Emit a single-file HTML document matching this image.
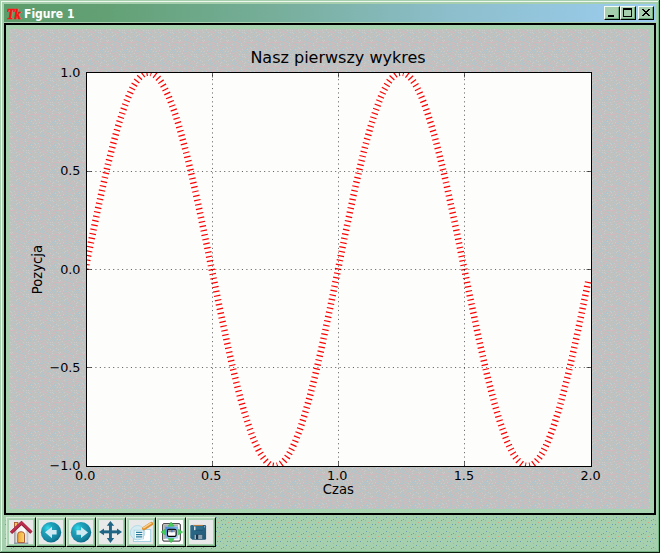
<!DOCTYPE html>
<html><head><meta charset="utf-8"><title>Figure 1</title>
<style>
html,body{margin:0;padding:0;}
body{width:660px;height:553px;overflow:hidden;background:#a6d0ad;position:relative;font-family:"DejaVu Sans","Liberation Sans",sans-serif;}
.abs{position:absolute;}
#frame{left:0;top:0;width:660px;height:553px;box-sizing:border-box;background:#a6d0ad;}
#fr-hl-t{left:1px;top:1px;width:657px;height:1px;background:#eef7ee;}
#fr-hl-l{left:1px;top:1px;width:1px;height:550px;background:#eef7ee;}
#fr-sh-r{left:658px;top:1px;width:1px;height:551px;background:#74b384;}
#fr-sh-b{left:1px;top:551px;width:658px;height:1px;background:#74b384;}
#fr-bk-r{left:659px;top:0;width:1px;height:553px;background:#0a1a0c;}
#fr-bk-b{left:0;top:552px;width:660px;height:1px;background:#0a1a0c;}
#title{left:4px;top:4px;width:652px;height:18px;background:linear-gradient(to right,rgb(92,156,106) 0%,rgb(99,161,117) 16%,rgb(121,176,160) 45%,rgb(140,190,203) 68%,rgb(156,205,240) 100%);}
#title .txt{position:absolute;left:20px;top:3px;color:#fff;font:bold 12px "DejaVu Sans Condensed","DejaVu Sans","Liberation Sans",sans-serif;line-height:14px;white-space:nowrap;letter-spacing:0px}
.tb{position:absolute;top:2px;width:16px;height:14px;box-sizing:border-box;background:#a6d0ad;border-top:1px solid #f4faf4;border-left:1px solid #f4faf4;border-right:1px solid #000;border-bottom:1px solid #000;}
.tb:before{content:"";position:absolute;left:0;top:0;right:0;bottom:0;border-right:1px solid #6aa878;border-bottom:1px solid #6aa878;}
#canvas{left:4px;top:23px;width:652px;height:492px;box-sizing:border-box;border:2px solid #000;background:#a9d3b0;}
#fig{left:10px;top:29px;width:640px;height:480px;background:#c1c1c1;}
.btn{position:absolute;top:517px;width:30px;height:30px;box-sizing:border-box;background:#a6d0ad;border-top:1px solid #d8ecda;border-left:1px solid #d8ecda;border-right:1px solid #000;border-bottom:1px solid #000;}
.btn:before{content:"";position:absolute;left:0;top:0;right:0;bottom:0;border-top:1px solid #aed5b5;border-left:1px solid #aed5b5;border-right:1px solid #78b486;border-bottom:1px solid #78b486;}
.btn .face{position:absolute;left:2px;top:2px;width:24px;height:24px;background:#e9e9e9;}
.btn svg{position:absolute;left:2px;top:2px;width:24px;height:24px;}
</style></head><body>
<div id="frame" class="abs"></div>
<div id="fr-hl-t" class="abs"></div><div id="fr-hl-l" class="abs"></div>
<div id="fr-sh-r" class="abs"></div><div id="fr-sh-b" class="abs"></div>
<div id="fr-bk-r" class="abs"></div><div id="fr-bk-b" class="abs"></div>

<div id="title" class="abs">
<svg class="abs" style="left:1px;top:1px" width="19" height="16" viewBox="0 0 19 16"><text x="1.8" y="13.6" font-family="Liberation Serif, serif" font-style="italic" font-weight="bold" font-size="14.5" fill="#ff1010" stroke="#ff1010" stroke-width="0.55" textLength="14" lengthAdjust="spacingAndGlyphs">Tk</text></svg>
<span class="txt">Figure 1</span>
<div class="tb" style="left:600px"><svg class="abs" style="left:0;top:0" width="14" height="12"><rect x="3" y="8" width="6" height="2" fill="#000"/></svg></div>
<div class="tb" style="left:616px"><svg class="abs" style="left:0;top:0" width="14" height="12"><rect x="2.5" y="2" width="8" height="7.5" fill="none" stroke="#000" stroke-width="1"/><rect x="2" y="1" width="9" height="2" fill="#000"/></svg></div>
<div class="tb" style="left:634px"><svg class="abs" style="left:0;top:0" width="14" height="12"><path d="M3 2h2v1h-2zM9 2h2v1h-2zM4 3h2v1h-2zM8 3h2v1h-2zM5 4h4v1h-4zM6 5h2v1h-2zM5 6h4v1h-4zM4 7h2v1h-2zM8 7h2v1h-2zM3 8h2v1h-2zM9 8h2v1h-2z" fill="#000" shape-rendering="crispEdges"/></svg></div>
</div>

<div id="canvas" class="abs"></div>
<div id="fig" class="abs"></div>

<svg class="abs" style="left:0;top:0" width="660" height="553" viewBox="0 0 660 553" font-family="DejaVu Sans, Liberation Sans, sans-serif">
<defs><pattern id="dg" width="24" height="24" patternUnits="userSpaceOnUse"><rect width="24" height="24" fill="#c0c2c0"/><path d="M0 1h1v1h-1zM0 13h1v1h-1zM1 5h1v1h-1zM1 7h1v1h-1zM1 17h1v1h-1zM1 23h1v1h-1zM2 15h1v1h-1zM2 18h1v1h-1zM3 3h1v1h-1zM3 5h1v1h-1zM3 7h1v1h-1zM3 12h1v1h-1zM3 16h1v1h-1zM4 21h1v1h-1zM4 23h1v1h-1zM5 1h1v1h-1zM5 3h1v1h-1zM5 22h1v1h-1zM6 10h1v1h-1zM6 18h1v1h-1zM6 21h1v1h-1zM7 9h1v1h-1zM7 13h1v1h-1zM7 16h1v1h-1zM8 7h1v1h-1zM8 18h1v1h-1zM9 11h1v1h-1zM10 1h1v1h-1zM10 18h1v1h-1zM11 5h1v1h-1zM11 12h1v1h-1zM11 14h1v1h-1zM11 21h1v1h-1zM12 18h1v1h-1zM13 1h1v1h-1zM13 4h1v1h-1zM13 11h1v1h-1zM13 19h1v1h-1zM14 3h1v1h-1zM14 18h1v1h-1zM14 21h1v1h-1zM15 6h1v1h-1zM15 13h1v1h-1zM15 16h1v1h-1zM15 19h1v1h-1zM16 1h1v1h-1zM16 5h1v1h-1zM16 17h1v1h-1zM16 23h1v1h-1zM17 4h1v1h-1zM17 18h1v1h-1zM17 22h1v1h-1zM18 7h1v1h-1zM19 0h1v1h-1zM19 13h1v1h-1zM19 22h1v1h-1zM20 4h1v1h-1zM20 8h1v1h-1zM20 12h1v1h-1zM20 18h1v1h-1zM20 21h1v1h-1zM20 23h1v1h-1zM21 0h1v1h-1zM21 10h1v1h-1zM22 8h1v1h-1zM22 15h1v1h-1zM22 19h1v1h-1zM22 22h1v1h-1zM23 9h1v1h-1z" fill="#d3b6bd"/><path d="M0 8h1v1h-1zM0 11h1v1h-1zM0 18h1v1h-1zM0 22h1v1h-1zM1 2h1v1h-1zM1 9h1v1h-1zM2 4h1v1h-1zM2 10h1v1h-1zM3 0h1v1h-1zM3 14h1v1h-1zM3 19h1v1h-1zM3 22h1v1h-1zM4 2h1v1h-1zM5 5h1v1h-1zM5 16h1v1h-1zM5 19h1v1h-1zM6 0h1v1h-1zM6 2h1v1h-1zM6 4h1v1h-1zM6 8h1v1h-1zM6 12h1v1h-1zM7 3h1v1h-1zM7 5h1v1h-1zM7 11h1v1h-1zM7 19h1v1h-1zM7 23h1v1h-1zM8 0h1v1h-1zM8 14h1v1h-1zM8 20h1v1h-1zM9 5h1v1h-1zM9 8h1v1h-1zM9 15h1v1h-1zM9 17h1v1h-1zM9 21h1v1h-1zM10 4h1v1h-1zM11 10h1v1h-1zM12 23h1v1h-1zM13 7h1v1h-1zM13 14h1v1h-1zM14 8h1v1h-1zM14 12h1v1h-1zM15 4h1v1h-1zM15 10h1v1h-1zM15 22h1v1h-1zM16 3h1v1h-1zM16 15h1v1h-1zM17 6h1v1h-1zM17 9h1v1h-1zM17 13h1v1h-1zM18 1h1v1h-1zM18 3h1v1h-1zM18 12h1v1h-1zM18 14h1v1h-1zM18 16h1v1h-1zM18 20h1v1h-1zM18 23h1v1h-1zM19 2h1v1h-1zM19 5h1v1h-1zM19 17h1v1h-1zM20 15h1v1h-1zM21 3h1v1h-1zM21 6h1v1h-1zM21 14h1v1h-1zM22 2h1v1h-1zM22 17h1v1h-1zM23 4h1v1h-1zM23 12h1v1h-1zM23 16h1v1h-1zM23 20h1v1h-1z" fill="#adc4ce"/><path d="M0 3h1v1h-1zM1 19h1v1h-1zM1 21h1v1h-1zM2 1h1v1h-1zM2 6h1v1h-1zM2 8h1v1h-1zM2 13h1v1h-1zM4 6h1v1h-1zM4 8h1v1h-1zM4 15h1v1h-1zM4 17h1v1h-1zM5 9h1v1h-1zM5 14h1v1h-1zM7 1h1v1h-1zM8 12h1v1h-1zM9 3h1v1h-1zM10 6h1v1h-1zM10 13h1v1h-1zM10 16h1v1h-1zM10 23h1v1h-1zM11 0h1v1h-1zM11 8h1v1h-1zM11 17h1v1h-1zM12 3h1v1h-1zM12 16h1v1h-1zM14 5h1v1h-1zM14 23h1v1h-1zM15 2h1v1h-1zM16 8h1v1h-1zM16 12h1v1h-1zM16 20h1v1h-1zM17 11h1v1h-1zM19 10h1v1h-1zM23 6h1v1h-1z" fill="#cacaca"/></pattern><pattern id="dn" width="10" height="14" patternUnits="userSpaceOnUse" x="0" y="2"><path d="M0 7h1v1h-1zM1 0h1v1h-1zM2 4h1v1h-1zM3 13h1v1h-1zM5 4h1v1h-1zM6 11h1v1h-1zM7 7h1v1h-1z" fill="#6a9eb4"/><path d="M3 9h1v1h-1zM5 0h1v1h-1zM8 2h1v1h-1zM9 12h1v1h-1z" fill="#d4a284"/></pattern><clipPath id="axclip"><rect x="86.5" y="72.5" width="505" height="394"/></clipPath></defs>
<rect x="10" y="29" width="640" height="480" fill="url(#dg)"/>
<rect x="4" y="515" width="652" height="34" fill="url(#dn)"/>
<rect x="86.5" y="72.5" width="505" height="394" fill="#fdfefc"/>
<g clip-path="url(#axclip)">
<path d="M85.4 269.3 L87.9 256.9 L90.5 244.6 L93.0 232.4 L95.5 220.4 L98.0 208.5 L100.6 196.9 L103.1 185.5 L105.6 174.5 L108.1 163.8 L110.7 153.6 L113.2 143.9 L115.7 134.6 L118.2 125.8 L120.8 117.7 L123.3 110.1 L125.8 103.1 L128.4 96.8 L130.9 91.2 L133.4 86.3 L135.9 82.1 L138.5 78.7 L141.0 76.0 L143.5 74.1 L146.0 72.9 L148.6 72.5 L151.1 72.9 L153.6 74.1 L156.1 76.0 L158.7 78.7 L161.2 82.1 L163.7 86.3 L166.2 91.2 L168.8 96.8 L171.3 103.1 L173.8 110.1 L176.4 117.7 L178.9 125.8 L181.4 134.6 L183.9 143.9 L186.5 153.6 L189.0 163.8 L191.5 174.5 L194.0 185.5 L196.6 196.9 L199.1 208.5 L201.6 220.4 L204.1 232.4 L206.7 244.6 L209.2 256.9 L211.7 269.3 L214.3 281.7 L216.8 294.0 L219.3 306.2 L221.8 318.2 L224.4 330.1 L226.9 341.7 L229.4 353.1 L231.9 364.1 L234.5 374.8 L237.0 385.0 L239.5 394.7 L242.0 404.0 L244.6 412.8 L247.1 420.9 L249.6 428.5 L252.1 435.5 L254.7 441.8 L257.2 447.4 L259.7 452.3 L262.3 456.5 L264.8 459.9 L267.3 462.6 L269.8 464.5 L272.4 465.7 L274.9 466.1 L277.4 465.7 L279.9 464.5 L282.5 462.6 L285.0 459.9 L287.5 456.5 L290.0 452.3 L292.6 447.4 L295.1 441.8 L297.6 435.5 L300.2 428.5 L302.7 420.9 L305.2 412.8 L307.7 404.0 L310.3 394.7 L312.8 385.0 L315.3 374.8 L317.8 364.1 L320.4 353.1 L322.9 341.7 L325.4 330.1 L327.9 318.2 L330.5 306.2 L333.0 294.0 L335.5 281.7 L338.1 269.3 L340.6 256.9 L343.1 244.6 L345.6 232.4 L348.2 220.4 L350.7 208.5 L353.2 196.9 L355.7 185.5 L358.3 174.5 L360.8 163.8 L363.3 153.6 L365.8 143.9 L368.4 134.6 L370.9 125.8 L373.4 117.7 L375.9 110.1 L378.5 103.1 L381.0 96.8 L383.5 91.2 L386.1 86.3 L388.6 82.1 L391.1 78.7 L393.6 76.0 L396.2 74.1 L398.7 72.9 L401.2 72.5 L403.7 72.9 L406.3 74.1 L408.8 76.0 L411.3 78.7 L413.8 82.1 L416.4 86.3 L418.9 91.2 L421.4 96.8 L424.0 103.1 L426.5 110.1 L429.0 117.7 L431.5 125.8 L434.1 134.6 L436.6 143.9 L439.1 153.6 L441.6 163.8 L444.2 174.5 L446.7 185.5 L449.2 196.9 L451.7 208.5 L454.3 220.4 L456.8 232.4 L459.3 244.6 L461.8 256.9 L464.4 269.3 L466.9 281.7 L469.4 294.0 L472.0 306.2 L474.5 318.2 L477.0 330.1 L479.5 341.7 L482.1 353.1 L484.6 364.1 L487.1 374.8 L489.6 385.0 L492.2 394.7 L494.7 404.0 L497.2 412.8 L499.7 420.9 L502.3 428.5 L504.8 435.5 L507.3 441.8 L509.9 447.4 L512.4 452.3 L514.9 456.5 L517.4 459.9 L520.0 462.6 L522.5 464.5 L525.0 465.7 L527.5 466.1 L530.1 465.7 L532.6 464.5 L535.1 462.6 L537.6 459.9 L540.2 456.5 L542.7 452.3 L545.2 447.4 L547.7 441.8 L550.3 435.5 L552.8 428.5 L555.3 420.9 L557.9 412.8 L560.4 404.0 L562.9 394.7 L565.4 385.0 L568.0 374.8 L570.5 364.1 L573.0 353.1 L575.5 341.7 L578.1 330.1 L580.6 318.2 L583.1 306.2 L585.6 294.0 L588.2 281.7" fill="none" stroke="#ff0000" stroke-width="6.6" stroke-dasharray="1.2 3.24" stroke-linejoin="round"/>
</g>
<g stroke="#000" stroke-width="0.6" stroke-dasharray="1.11 3.33" fill="none">
<path d="M212.5 466.5V72.5M338.5 466.5V72.5M464.5 466.5V72.5"/>
<path d="M86.5 171.5H591.5M86.5 269.5H591.5M86.5 367.5H591.5"/>
</g>
<g stroke="#000" stroke-width="0.6" fill="none">
<path d="M86.5 466.5v-5M212.5 466.5v-5M338.5 466.5v-5M464.5 466.5v-5M591.5 466.5v-5"/>
<path d="M86.5 72.5v5M212.5 72.5v5M338.5 72.5v5M464.5 72.5v5M591.5 72.5v5"/>
<path d="M86.5 72.5h5M86.5 171.5h5M86.5 269.5h5M86.5 367.5h5M86.5 466.5h5"/>
<path d="M591.5 72.5h-5M591.5 171.5h-5M591.5 269.5h-5M591.5 367.5h-5M591.5 466.5h-5"/>
</g>
<rect x="86.5" y="72.5" width="505" height="394" fill="none" stroke="#000" stroke-width="1"/>
<g font-size="12.8" fill="#000" text-anchor="middle">
<text x="85.2" y="479.8">0.0</text>
<text x="211.2" y="479.8">0.5</text>
<text x="337.2" y="479.8">1.0</text>
<text x="463.9" y="479.8">1.5</text>
<text x="590.6" y="479.8">2.0</text>
<text x="338.3" y="494.4" font-size="13.2">Czas</text>
</g>
<g font-size="12.8" fill="#000" text-anchor="end">
<text x="80.5" y="76.6">1.0</text>
<text x="80.5" y="175.1">0.5</text>
<text x="80.5" y="273.6">0.0</text>
<text x="80.5" y="372.1">−0.5</text>
<text x="80.5" y="470">−1.0</text>
</g>
<text font-size="13.2" fill="#000" text-anchor="middle" transform="translate(42,269.6) rotate(-90)">Pozycja</text>
<text x="338" y="63.3" font-size="16" fill="#000" text-anchor="middle">Nasz pierwszy wykres</text>
</svg>

<!-- toolbar -->
<div class="btn" style="left:6px"><div class="face"></div><svg viewBox="3 3 24 24">
<defs><linearGradient id="door" x1="0" y1="0" x2="1" y2="0"><stop offset="0" stop-color="#f0a630"/><stop offset="1" stop-color="#f9d674"/></linearGradient>
<linearGradient id="wall" x1="0" y1="0" x2="1" y2="0"><stop offset="0" stop-color="#8c8c8c"/><stop offset="0.2" stop-color="#ececec"/><stop offset="0.75" stop-color="#ffffff"/><stop offset="1" stop-color="#b4bcc2"/></linearGradient></defs>
<rect x="8.5" y="5.5" width="3.3" height="6.5" fill="#f6c060" stroke="#a85a30" stroke-width="0.9"/>
<path d="M8.2 14 L15.5 7.5 L22.2 14 V26.7 H8.2Z" fill="url(#wall)"/>
<path d="M8.2 26.2H22.2" stroke="#6c8494" stroke-width="1"/>
<path d="M11.7 25.6 V17.2 Q11.7 14.7 15.1 14.7 Q18.5 14.7 18.5 17.2 V25.6Z" fill="url(#door)" stroke="#a4502c" stroke-width="0.9"/>
<path d="M5 15.9 L15.5 6 L25.4 15.6" fill="none" stroke="#8e2038" stroke-width="3.2" stroke-linejoin="miter"/>
<path d="M5 15.3 L15.5 5.5 L25.4 15" fill="none" stroke="#bc2c4e" stroke-width="2.3" stroke-linejoin="miter"/>
</svg></div>

<div class="btn" style="left:36px"><div class="face"></div><svg viewBox="3 3 24 24">
<defs><radialGradient id="ball" cx="0.34" cy="0.3" r="0.78"><stop offset="0" stop-color="#34dcec"/><stop offset="0.3" stop-color="#1fa4bc"/><stop offset="0.8" stop-color="#14809c"/><stop offset="1" stop-color="#0c607c"/></radialGradient></defs>
<circle cx="15" cy="15.2" r="10.2" fill="url(#ball)"/>
<path d="M9 15.2 L16 9.8 V13 H20.6 V17.4 H16 V21.2Z" fill="#cfe9f2"/>
</svg></div>

<div class="btn" style="left:66px"><div class="face"></div><svg viewBox="3 3 24 24">
<circle cx="15" cy="15.2" r="10.2" fill="url(#ball)"/>
<path d="M22 15.5 L15 10 V13.3 H10.5 V17.7 H15 V21Z" fill="#cfe9f2"/>
</svg></div>

<div class="btn" style="left:96px"><div class="face"></div><svg viewBox="3 3 24 24">
<g fill="#1f6484" stroke="none">
<rect x="13" y="7" width="2.9" height="16"/><rect x="6" y="13.4" width="17" height="2.9"/>
<path d="M14.4 4 L18.2 8.8 H10.8Z"/><path d="M14.4 25.9 L18.2 21.1 H10.8Z"/>
<path d="M3 14.9 L8 11.5 V18.2Z"/><path d="M26 14.9 L21 11.5 V18.2Z"/>
</g></svg></div>

<div class="btn" style="left:126px"><div class="face"></div><svg viewBox="3 3 24 24">
<rect x="7.4" y="12.6" width="17.3" height="11.8" fill="#ffffff" stroke="#98cce0" stroke-width="0.9"/>
<circle cx="11.6" cy="15.7" r="7.2" fill="#d4ecf2" fill-opacity="0.9" stroke="#b0d8e6" stroke-width="0.9"/>
<rect x="8.2" y="13.2" width="9.2" height="8.8" fill="#f4fbfd" stroke="#a0d2e2" stroke-width="0.7"/>
<path d="M10 15.3H16.3M10 17.6H16.3M10 19.8H16.3" stroke="#2a7e9c" stroke-width="1.3"/>
<path d="M17.9 11.5 L25.3 6.8" stroke="#e0902c" stroke-width="3.7" stroke-linecap="round"/>
<path d="M17.7 10.8 L25 6.2" stroke="#f9d08c" stroke-width="1.5" stroke-linecap="round"/>
</svg></div>

<div class="btn" style="left:156px"><div class="face" style="background:#ffffff"></div><svg viewBox="3 3 24 24">
<defs><linearGradient id="sp" x1="0" y1="0" x2="1" y2="1"><stop offset="0" stop-color="#3c84d4"/><stop offset="1" stop-color="#bcdef4"/></linearGradient></defs>
<rect x="6.7" y="6.7" width="17.6" height="17.4" rx="1.2" fill="#fff" stroke="#111" stroke-width="0.9"/>
<path d="M7.4 7.4 H22 V9.6 H9.4 V22 H7.4Z" fill="#b0b0b0"/>
<rect x="9.2" y="9.5" width="13" height="12.2" fill="url(#sp)"/>
<rect x="11.5" y="12.4" width="8.6" height="7" rx="1.3" fill="#fff" stroke="#000" stroke-width="1.1"/>
<rect x="12.1" y="12.9" width="7.4" height="2.3" fill="#9a9a9a"/><rect x="14.9" y="12.9" width="1.8" height="2.3" fill="#4a80d0"/>
<g fill="#44d058" stroke="#2cb040" stroke-width="0.5"><path d="M15.1 5 L18.1 9.2 H12.1Z"/><path d="M15.1 25.8 L18.1 21.6 H12.1Z"/><path d="M4.9 15.1 L9.2 12.2 V18Z"/><path d="M26.7 15.1 L22.4 12.2 V18Z"/></g>
</svg></div>

<div class="btn" style="left:186px"><div class="face"></div><svg viewBox="3 3 24 24">
<defs><linearGradient id="fl" x1="0" y1="0" x2="1" y2="1"><stop offset="0" stop-color="#2d6c8c"/><stop offset="1" stop-color="#215a78"/></linearGradient></defs>
<path d="M5.6 7.9 H19 Q20.1 7.9 20.1 9 V21.6 Q20.1 22.8 18.9 22.8 H6.4 L4.3 21 V9.2 Q4.3 7.9 5.6 7.9Z" fill="url(#fl)"/>
<rect x="7" y="7.9" width="9.8" height="1.1" fill="#b07c44"/>
<rect x="8" y="9.5" width="8.8" height="4" fill="#30708f"/>
<rect x="8" y="9.5" width="1.5" height="3.6" fill="#d4e0e6"/>
<rect x="9.6" y="12.8" width="7.2" height="0.8" fill="#1a4a66"/>
<rect x="8.7" y="17.6" width="7.6" height="4.7" fill="#14344c"/>
<rect x="12.2" y="17.8" width="4.1" height="4.4" fill="#8ea4b0"/>
<rect x="8.7" y="17.8" width="1" height="4.4" fill="#dfe6ea"/>
<rect x="18.1" y="9.2" width="1" height="1.2" fill="#9cc4d8"/>
</svg></div>

</body></html>
